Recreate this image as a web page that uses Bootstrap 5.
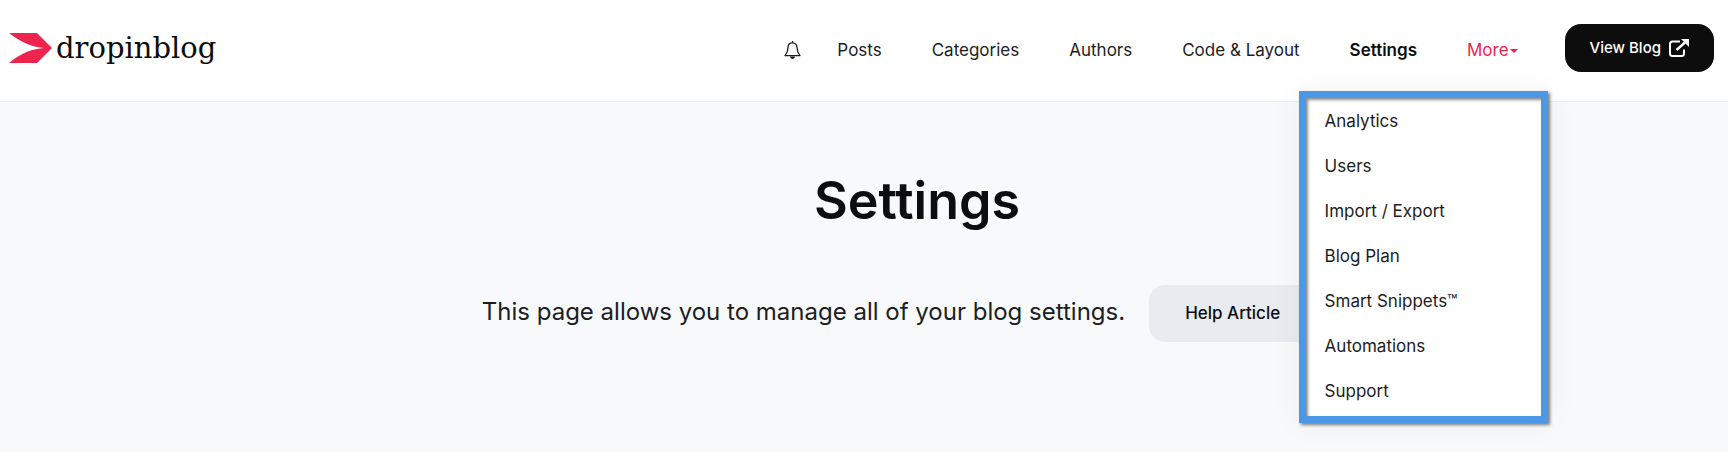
<!DOCTYPE html>
<html lang="en">
<head>
<meta charset="utf-8">
<meta name="viewport" content="width=device-width, initial-scale=1">
<title>Settings - dropinblog</title>
<link href="https://cdn.jsdelivr.net/npm/bootstrap@5.3.0/dist/css/bootstrap.min.css" rel="stylesheet">
<style>
  body { font-family: Inter, "Liberation Sans", sans-serif; background: #f8f9fb; color: #1b1d21; }
  .site-header { background: #fff; border-bottom: 1px solid #eceef1; padding: 24px 14px 29px 9px; }
  .brand-name { font-family: "DejaVu Serif", serif; font-size: 29px; line-height: 40px; color: #0d0d0d; }
  .main-nav { gap: 50px; font-size: 17px; line-height: 28px; font-weight: 400; padding-top: 4px; }
  .main-nav a { color: #1b1d21; text-decoration: none; white-space: nowrap; }
  .main-nav .alerts { margin-right: -14px; }
  .main-nav .nav-current { font-weight: 600; color: #0d0d0d; }
  .main-nav .more-toggle { color: #ed254e; }
  .more-toggle::after { content: ""; display: inline-block; margin-left: 1px; vertical-align: 3px; border: 4px solid transparent; border-top-color: currentColor; border-bottom: 0; }
  .view-blog { background: #0d0d0d; color: #fff; border: 0; border-radius: 16px; height: 48px; padding: 0 25px; font-size: 15px; font-weight: 500; margin-left: 47px; }
  .more-menu { position: absolute; z-index: 5; top: 55px; right: -30px; width: 249px; margin: 0; padding: 1px 19px 2px; background: #fff; border: 7px solid #4a98e6; box-shadow: 2px 2px 3px rgba(0,0,0,.5), inset 2px 2px 3px rgba(0,0,0,.45), 0 0 30px rgba(0,0,0,.05); }
  .more-menu a { display: block; line-height: 45px; }
  .hero { padding: 64px 0 109px 106px; }
  .hero h1 { font-size: 52px; line-height: 70px; font-weight: 600; color: #0d0d0d; margin-bottom: 49px; }
  .hero-text { font-size: 24px; line-height: 40px; font-weight: 400; padding-bottom: 4px; }
  .help-btn { background: #e8ebf0; color: #0d0d0d; border: 0; border-radius: 16px; height: 57px; padding: 0 36px; font-size: 17px; font-weight: 500; margin-right: 36px; }
</style>
</head>
<body>
<header class="site-header d-flex align-items-center">
  <a href="#" class="d-flex align-items-center text-decoration-none gap-1" aria-label="dropinblog">
    <svg width="43" height="30" viewBox="0 0 43 30" aria-hidden="true"><path fill="#ed254e" d="M0 0H28L43 15L28 30H0C13 19 24 16 35 15C24 14 13 10 0 0Z"/></svg>
    <span class="brand-name">dropinblog</span>
  </a>
  <nav class="main-nav d-flex align-items-center ms-auto" aria-label="Main">
    <a href="#" class="alerts d-flex" aria-label="Notifications">
      <svg width="17" height="18" viewBox="0 0 17 18" fill="none" stroke="#1b1d21" stroke-width="1.3" stroke-linejoin="round" aria-hidden="true"><path d="M8.5 1.8C5.5 1.8 4 4 4 6.5C4 10.5 2.7 12.5 1 14.6H16C14.3 12.5 13 10.5 13 6.5C13 4 11.5 1.8 8.5 1.8ZM8.5 0V2"/><path fill="#1b1d21" stroke="none" d="M6 15.5H11C10.8 17 9.8 18 8.5 18S6.2 17 6 15.5Z"/></svg>
    </a>
    <a href="#">Posts</a>
    <a href="#">Categories</a>
    <a href="#">Authors</a>
    <a href="#">Code &amp; Layout</a>
    <a href="#" class="nav-current" aria-current="page">Settings</a>
    <div class="position-relative">
      <a href="#" class="more-toggle" aria-expanded="true">More</a>
      <ul class="more-menu list-unstyled">
        <li><a href="#">Analytics</a></li>
        <li><a href="#">Users</a></li>
        <li><a href="#">Import / Export</a></li>
        <li><a href="#">Blog Plan</a></li>
        <li><a href="#">Smart Snippets™</a></li>
        <li><a href="#">Automations</a></li>
        <li><a href="#">Support</a></li>
      </ul>
    </div>
  </nav>
  <button type="button" class="view-blog d-flex align-items-center gap-2 text-nowrap">View Blog
    <svg width="20" height="18" viewBox="0 0 20 18" fill="none" stroke="#fff" stroke-width="2" aria-hidden="true"><path d="M11 2.5H3.5Q1 2.5 1 5V14.5Q1 17 3.5 17H12.5Q15 17 15 14.5V10.5"/><path stroke-width="2.4" d="M7.5 11L16.5 3"/><path fill="#fff" stroke="none" d="M12 0H20V8Z"/></svg>
  </button>
</header>
<main class="hero text-center">
  <h1>Settings</h1>
  <div class="d-flex justify-content-center align-items-center gap-4">
    <p class="hero-text mb-0">This page allows you to manage all of your blog settings.</p>
    <button type="button" class="help-btn text-nowrap">Help Article</button>
  </div>
</main>
<script src="https://cdn.jsdelivr.net/npm/bootstrap@5.3.0/dist/js/bootstrap.bundle.min.js"></script>
</body>
</html>
